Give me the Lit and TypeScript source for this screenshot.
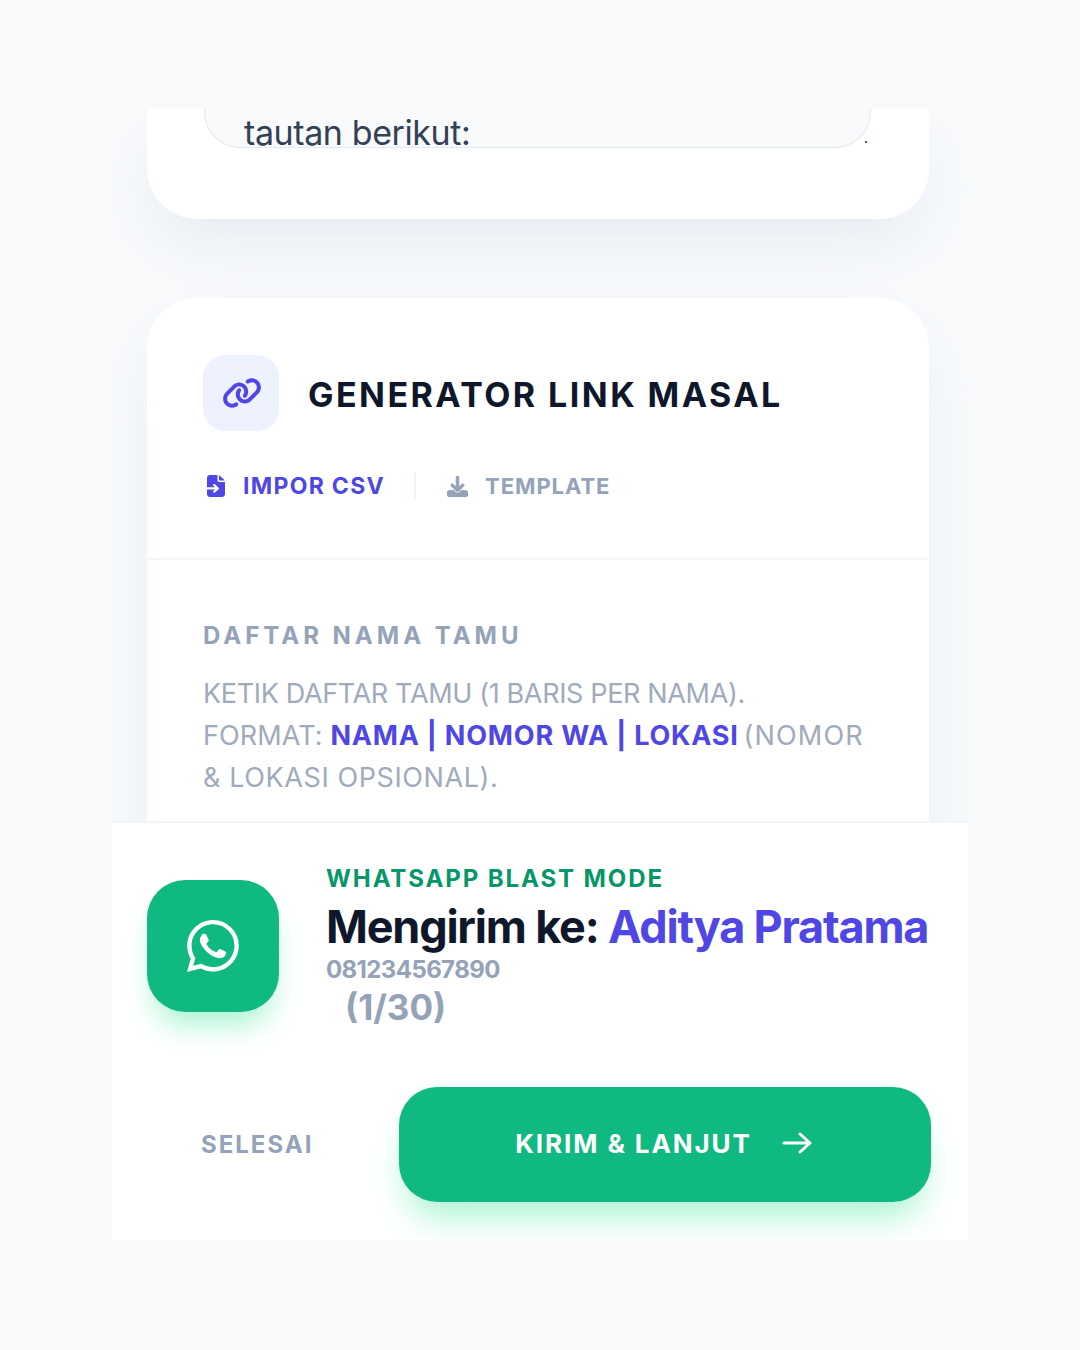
import { LitElement, html, css } from "lit";
import { customElement } from "lit/decorators.js";

@customElement("app-root")
export class AppRoot extends LitElement {
  static styles = css`
    :host {
      display: block;
      height: 1350px;
      box-sizing: border-box;
      padding: 108px 112px 110px;
      background: #f8fafc;
      font-family: Inter, "Liberation Sans", sans-serif;
      -webkit-font-smoothing: antialiased;
    }
    .frame { height: 1132px; display: flex; flex-direction: column; overflow: hidden; }
    .scroll { height: 713px; flex: none; overflow: hidden; padding: 0 39px 0 35px; display: flex; flex-direction: column; gap: 79px; }
    .card { background: #fff; box-shadow: 0 30px 60px -12px rgba(226, 232, 240, 0.85); flex: none; }
    .card-top { height: 111px; border-radius: 0 0 50px 50px; padding: 0 58px 0 57px; }
    .note-wrap { position: relative; }
    .note {
      height: 40px; box-sizing: border-box;
      background: #f8fafc; border: 1px solid #e2e8f0; border-top: none;
      border-radius: 0 0 36px 36px; padding: 0 39px; overflow: hidden;
      font-size: 34px; line-height: 49px; letter-spacing: -0.4px; color: #334155;
    }
    .speck { position: absolute; right: 4px; top: 33px; width: 2px; height: 2px; background: #475569; }
    .card-main { height: 600px; border-radius: 50px 50px 0 0; }
    .head { padding: 57px 57px 0 56px; border-bottom: 2px solid #f5f7fa; height: 262px; box-sizing: border-box; }
    .title-row { display: flex; align-items: center; gap: 29px; }
    .link-box { width: 76px; height: 76px; border-radius: 22px; background: #eef2ff; display: flex; align-items: center; justify-content: center; }
    .link-box svg { width: 40px; height: 32px; margin-left: 2px; }
    .title { font-size: 34px; line-height: 44px; font-weight: 700; letter-spacing: 2.45px; color: #0f172a; padding-top: 4px; }
    .tools { display: flex; align-items: center; margin-top: 26px; height: 58px; font-weight: 700; }
    .tool { display: flex; align-items: center; }
    .imp { color: #4f46e5; gap: 18px; padding-left: 4px; font-size: 23px; letter-spacing: 1.3px; }
    .tpl { color: #94a3b8; gap: 17px; font-size: 22px; letter-spacing: 0.95px; }
    .imp svg { width: 18px; height: 22px; }
    .tpl svg { width: 21px; height: 21px; }
    .sep { width: 2px; height: 28px; background: #f1f5f9; margin: 0 31px 0 29px; }
    .body { padding: 61px 56px 0; }
    .label { font-size: 24px; font-weight: 700; letter-spacing: 4px; color: #94a3b8; line-height: 30px; }
    .desc { margin-top: 22px; font-size: 27px; line-height: 42px; color: #9fabbc; }
    .line { display: block; white-space: nowrap; }
    .l1 { letter-spacing: -0.35px; }
    .l2 { letter-spacing: 0.1px; }
    .l3 { letter-spacing: 0.6px; }
    .desc b { color: #4f46e5; font-weight: 700; letter-spacing: 0.8px; }
    .tail { letter-spacing: 1.2px; margin-left: -3px; }
    .bar { height: 419px; box-sizing: border-box; flex: none; background: #fff; border-top: 2px solid #f1f5f9; padding: 0 37px 0 35px; display: flex; flex-direction: column; }
    .info { display: flex; align-items: flex-start; gap: 47px; margin-top: 41px; height: 223px; }
    .wa { width: 132px; height: 132px; flex: none; margin-top: 16px; border-radius: 38px; background: #10b981; display: flex; align-items: center; justify-content: center; box-shadow: 0 20px 30px -8px #a7f3d0; }
    .wa svg { width: 52px; height: 52px; }
    .mode { font-size: 24px; line-height: 30px; font-weight: 700; letter-spacing: 1.9px; color: #059669; }
    .who { font-size: 45px; line-height: 58px; font-weight: 700; letter-spacing: -1.2px; color: #0f172a; white-space: nowrap; margin-top: 4px; }
    .who span { color: #4f46e5; }
    .phone { font-size: 24px; line-height: 28px; font-weight: 700; color: #94a3b8; letter-spacing: -0.6px; }
    .count { font-size: 35px; line-height: 46px; font-weight: 700; color: #94a3b8; margin-left: 19px; }
    .actions { display: flex; align-items: center; }
    .done { width: 252px; flex: none; box-sizing: border-box; padding-left: 54px; font-size: 24px; font-weight: 700; letter-spacing: 2px; color: #94a3b8; }
    .send { width: 532px; height: 115px; flex: none; border-radius: 38px; background: #10b981; box-shadow: 0 24px 36px -10px #a7f3d0; display: flex; align-items: center; justify-content: center; gap: 30px; padding-right: 3px; box-sizing: border-box; color: #fff; font-size: 26px; line-height: 32px; font-weight: 700; letter-spacing: 1.9px; }
    .send span { margin-top: -2px; }
    .send svg { width: 30px; height: 22px; margin-top: -3px; }
  `;

  render() {
    return html`
      <div class="frame">
        <div class="scroll">
          <section class="card card-top">
            <div class="note-wrap">
              <div class="note">tautan berikut:</div>
              <i class="speck"></i>
            </div>
          </section>
          <section class="card card-main">
            <div class="head">
              <div class="title-row">
                <div class="link-box">
                  <svg viewBox="0 0 640 512"><path fill="#4f46e5" d="M579.8 267.7c56.5-56.5 56.5-148 0-204.5c-50-50-128.8-56.5-186.3-15.4l-1.6 1.1c-14.4 10.3-17.7 30.3-7.4 44.6s30.3 17.7 44.6 7.4l1.6-1.1c32.1-22.9 76-19.3 103.8 8.6c31.5 31.5 31.5 82.5 0 114L422.3 334.8c-31.5 31.5-82.5 31.5-114 0c-27.9-27.9-31.5-71.8-8.6-103.8l1.1-1.6c10.3-14.4 6.9-34.4-7.4-44.6s-34.4-6.9-44.6 7.4l-1.1 1.6C206.5 251.2 213 330 263 380c56.5 56.5 148 56.5 204.5 0L579.8 267.7zM60.2 244.3c-56.5 56.5-56.5 148 0 204.5c50 50 128.8 56.5 186.3 15.4l1.6-1.1c14.4-10.3 17.7-30.3 7.4-44.6s-30.3-17.7-44.6-7.4l-1.6 1.1c-32.1 22.9-76 19.3-103.8-8.6C74 372 74 321 105.5 289.500L217.7 177.200c31.500-31.500 82.500-31.500 114 0c27.900 27.900 31.500 71.800 8.600 103.900l-1.100 1.600c-10.300 14.400-6.900 34.400 7.400 44.600s34.400 6.900 44.600-7.400l1.100-1.600C433.500 260.800 427 182 377 132c-56.500-56.500-148-56.500-204.500 0L60.200 244.300z" /></svg>
                </div>
                <div class="title">GENERATOR LINK MASAL</div>
              </div>
              <div class="tools">
                <div class="tool imp">
                  <svg viewBox="128 0 384 512" preserveAspectRatio="none"><path fill="#4f46e5" d="M128 64c0-35.300 28.700-64 64-64H352V128c0 17.700 14.300 32 32 32H512V448c0 35.300-28.700 64-64 64H192c-35.300 0-64-28.700-64-64V336H302.100l-39 39c-9.400 9.400-9.400 24.600 0 33.900s24.600 9.400 33.900 0l80-80c9.400-9.400 9.400-24.600 0-33.900l-80-80c-9.400-9.400-24.600-9.400-33.900 0s-9.400 24.600 0 33.900l39 39H128V64zM512 128H384V0L512 128z" /></svg>
                  IMPOR CSV
                </div>
                <div class="sep"></div>
                <div class="tool tpl">
                  <svg viewBox="0 0 512 512"><path fill="#94a3b8" stroke="#94a3b8" stroke-width="22" d="M288 32c0-17.700-14.300-32-32-32s-32 14.300-32 32V274.700l-73.400-73.400c-12.500-12.500-32.800-12.500-45.300 0s-12.500 32.800 0 45.300l128 128c12.500 12.500 32.800 12.500 45.300 0l128-128c12.500-12.500 12.500-32.800 0-45.300s-32.800-12.500-45.300 0L288 274.700V32zM64 352c-35.300 0-64 28.700-64 64v32c0 35.300 28.700 64 64 64H448c35.300 0 64-28.700 64-64V416c0-35.300-28.700-64-64-64H346.500l-45.300 45.300c-25 25-65.500 25-90.500 0L165.500 352H64z" /></svg>
                  TEMPLATE
                </div>
              </div>
            </div>
            <div class="body">
              <div class="label">DAFTAR NAMA TAMU</div>
              <div class="desc">
                <span class="line l1">KETIK DAFTAR TAMU (1 BARIS PER NAMA).</span>
                <span class="line l2">FORMAT: <b>NAMA | NOMOR WA | LOKASI</b> <span class="tail">(NOMOR</span></span>
                <span class="line l3">&amp; LOKASI OPSIONAL).</span>
              </div>
            </div>
          </section>
        </div>
        <footer class="bar">
          <div class="info">
            <div class="wa">
              <svg viewBox="0 0 16 16"><path fill="#fff" d="M13.601 2.326A7.85 7.85 0 0 0 7.994 0C3.627 0 .068 3.558.064 7.926c0 1.399.366 2.76 1.057 3.965L0 16l4.204-1.102a7.9 7.9 0 0 0 3.79.965h.004c4.368 0 7.926-3.558 7.93-7.93A7.9 7.9 0 0 0 13.6 2.326zM7.994 14.521a6.6 6.6 0 0 1-3.356-.92l-.24-.144-2.494.654.666-2.433-.156-.251a6.56 6.56 0 0 1-1.007-3.505c0-3.626 2.957-6.584 6.591-6.584a6.56 6.56 0 0 1 4.66 1.931 6.56 6.56 0 0 1 1.928 4.66c-.004 3.639-2.961 6.592-6.592 6.592m3.615-4.934c-.197-.099-1.17-.578-1.353-.646-.182-.065-.315-.099-.445.099-.133.197-.513.646-.627.775-.114.133-.232.148-.43.05-.197-.1-.836-.308-1.592-.985-.59-.525-.985-1.175-1.103-1.372-.114-.198-.011-.304.088-.403.087-.088.197-.232.296-.346.1-.114.133-.198.198-.33.065-.134.034-.248-.015-.347-.05-.099-.445-1.076-.612-1.47-.16-.389-.323-.335-.445-.34-.114-.007-.247-.007-.38-.007a.73.73 0 0 0-.529.247c-.182.198-.691.677-.691 1.654s.71 1.916.81 2.049c.098.133 1.394 2.132 3.383 2.992.47.205.84.326 1.129.418.475.152.904.129 1.246.08.38-.058 1.171-.48 1.338-.943.164-.464.164-.86.114-.943-.049-.084-.182-.133-.38-.232" /></svg>
            </div>
            <div>
              <div class="mode">WHATSAPP BLAST MODE</div>
              <div class="who">Mengirim ke: <span>Aditya Pratama</span></div>
              <div class="phone">081234567890</div>
              <div class="count">(1/30)</div>
            </div>
          </div>
          <div class="actions">
            <div class="done">SELESAI</div>
            <div class="send">
              <span>KIRIM &amp; LANJUT</span>
              <svg viewBox="0 0 30 22" fill="none" stroke="#fff" stroke-width="3" stroke-linecap="round" stroke-linejoin="round"><path d="M2 11h26M18 2l10 9-10 9" /></svg>
            </div>
          </div>
        </footer>
      </div>
    `;
  }
}
